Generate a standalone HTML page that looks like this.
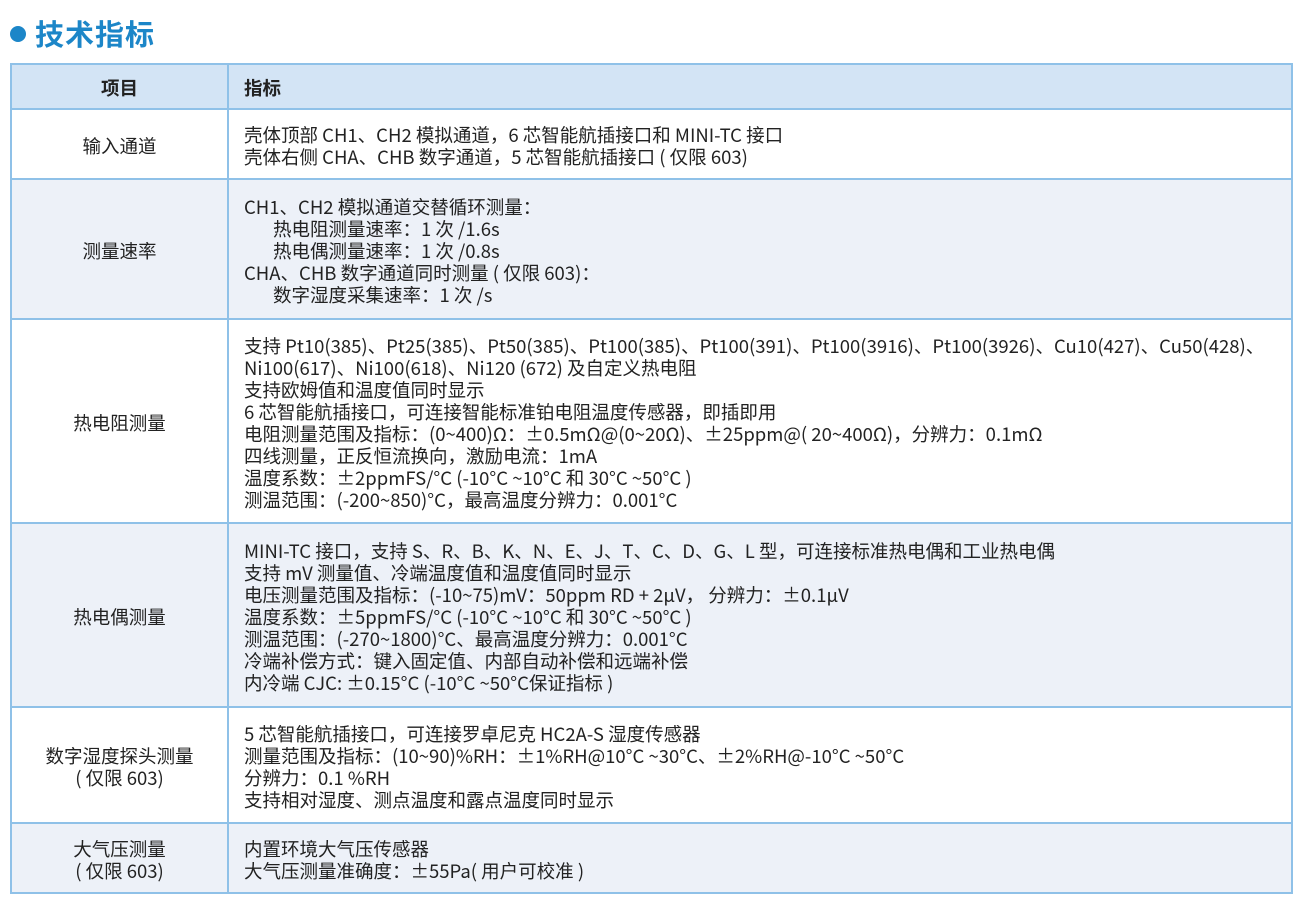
<!DOCTYPE html>
<html><head><meta charset="utf-8"><style>
body{margin:0;background:#fff;width:1302px;height:902px;overflow:hidden;font-family:"Noto Sans CJK SC","Liberation Sans",sans-serif;color:#222;}
.title{position:absolute;left:10px;top:13px;font-size:29px;line-height:40px;font-weight:bold;color:#1c86c8;letter-spacing:1px;}
.title .dot{display:inline-block;width:16px;height:16px;border-radius:50%;background:#1c86c8;margin-right:9px;vertical-align:3px;}
table{position:absolute;left:10px;top:63px;border-collapse:collapse;width:1283px;font-size:18.5px;line-height:22px;}
td{border:2px solid #8fc1e8;padding:3px 0 0 0;vertical-align:middle;}
td.a{width:215px;text-align:center;}
td.b{padding-left:15px;white-space:nowrap;}
tr.h td{background:#d3e4f5;font-weight:bold;height:40px;}
tr.l td{background:#edf1f8;}
.i{padding-left:29px;}
</style></head><body>
<div class="title"><span class="dot"></span>技术指标</div>
<table>
<tr class="h"><td class="a">项目</td><td class="b">指标</td></tr>
<tr style="height:70px"><td class="a">输入通道</td><td class="b">壳体顶部 CH1、CH2 模拟通道，6 芯智能航插接口和 MINI-TC 接口<br>壳体右侧 CHA、CHB 数字通道，5 芯智能航插接口 ( 仅限 603)</td></tr>
<tr class="l" style="height:140px"><td class="a">测量速率</td><td class="b">CH1、CH2 模拟通道交替循环测量：<div class="i">热电阻测量速率：1 次 /1.6s</div><div class="i">热电偶测量速率：1 次 /0.8s</div>CHA、CHB 数字通道同时测量 ( 仅限 603)：<div class="i">数字湿度采集速率：1 次 /s</div></td></tr>
<tr style="height:204px"><td class="a">热电阻测量</td><td class="b">支持 Pt10(385)、Pt25(385)、Pt50(385)、Pt100(385)、Pt100(391)、Pt100(3916)、Pt100(3926)、Cu10(427)、Cu50(428)、<br>Ni100(617)、Ni100(618)、Ni120 (672) 及自定义热电阻<br>支持欧姆值和温度值同时显示<br>6 芯智能航插接口，可连接智能标准铂电阻温度传感器，即插即用<br>电阻测量范围及指标：(0~400)Ω：±0.5mΩ@(0~20Ω)、±25ppm@( 20~400Ω)，分辨力：0.1mΩ<br>四线测量，正反恒流换向，激励电流：1mA<br>温度系数：±2ppmFS/°C (-10°C ~10°C 和 30°C ~50°C )<br>测温范围：(-200~850)°C，最高温度分辨力：0.001°C</td></tr>
<tr class="l" style="height:184px"><td class="a">热电偶测量</td><td class="b">MINI-TC 接口，支持 S、R、B、K、N、E、J、T、C、D、G、L 型，可连接标准热电偶和工业热电偶<br>支持 mV 测量值、冷端温度值和温度值同时显示<br>电压测量范围及指标：(-10~75)mV：50ppm RD + 2μV， 分辨力：±0.1μV<br>温度系数：±5ppmFS/°C (-10°C ~10°C 和 30°C ~50°C )<br>测温范围：(-270~1800)°C、最高温度分辨力：0.001°C<br>冷端补偿方式：键入固定值、内部自动补偿和远端补偿<br>内冷端 CJC: ±0.15°C (-10°C ~50°C保证指标 )</td></tr>
<tr style="height:116px"><td class="a">数字湿度探头测量<br>( 仅限 603)</td><td class="b">5 芯智能航插接口，可连接罗卓尼克 HC2A-S 湿度传感器<br>测量范围及指标：(10~90)%RH：±1%RH@10°C ~30°C、±2%RH@-10°C ~50°C<br>分辨力：0.1 %RH<br>支持相对湿度、测点温度和露点温度同时显示</td></tr>
<tr class="l" style="height:70px"><td class="a">大气压测量<br>( 仅限 603)</td><td class="b">内置环境大气压传感器<br>大气压测量准确度：±55Pa( 用户可校准 )</td></tr>
</table>
</body></html>
